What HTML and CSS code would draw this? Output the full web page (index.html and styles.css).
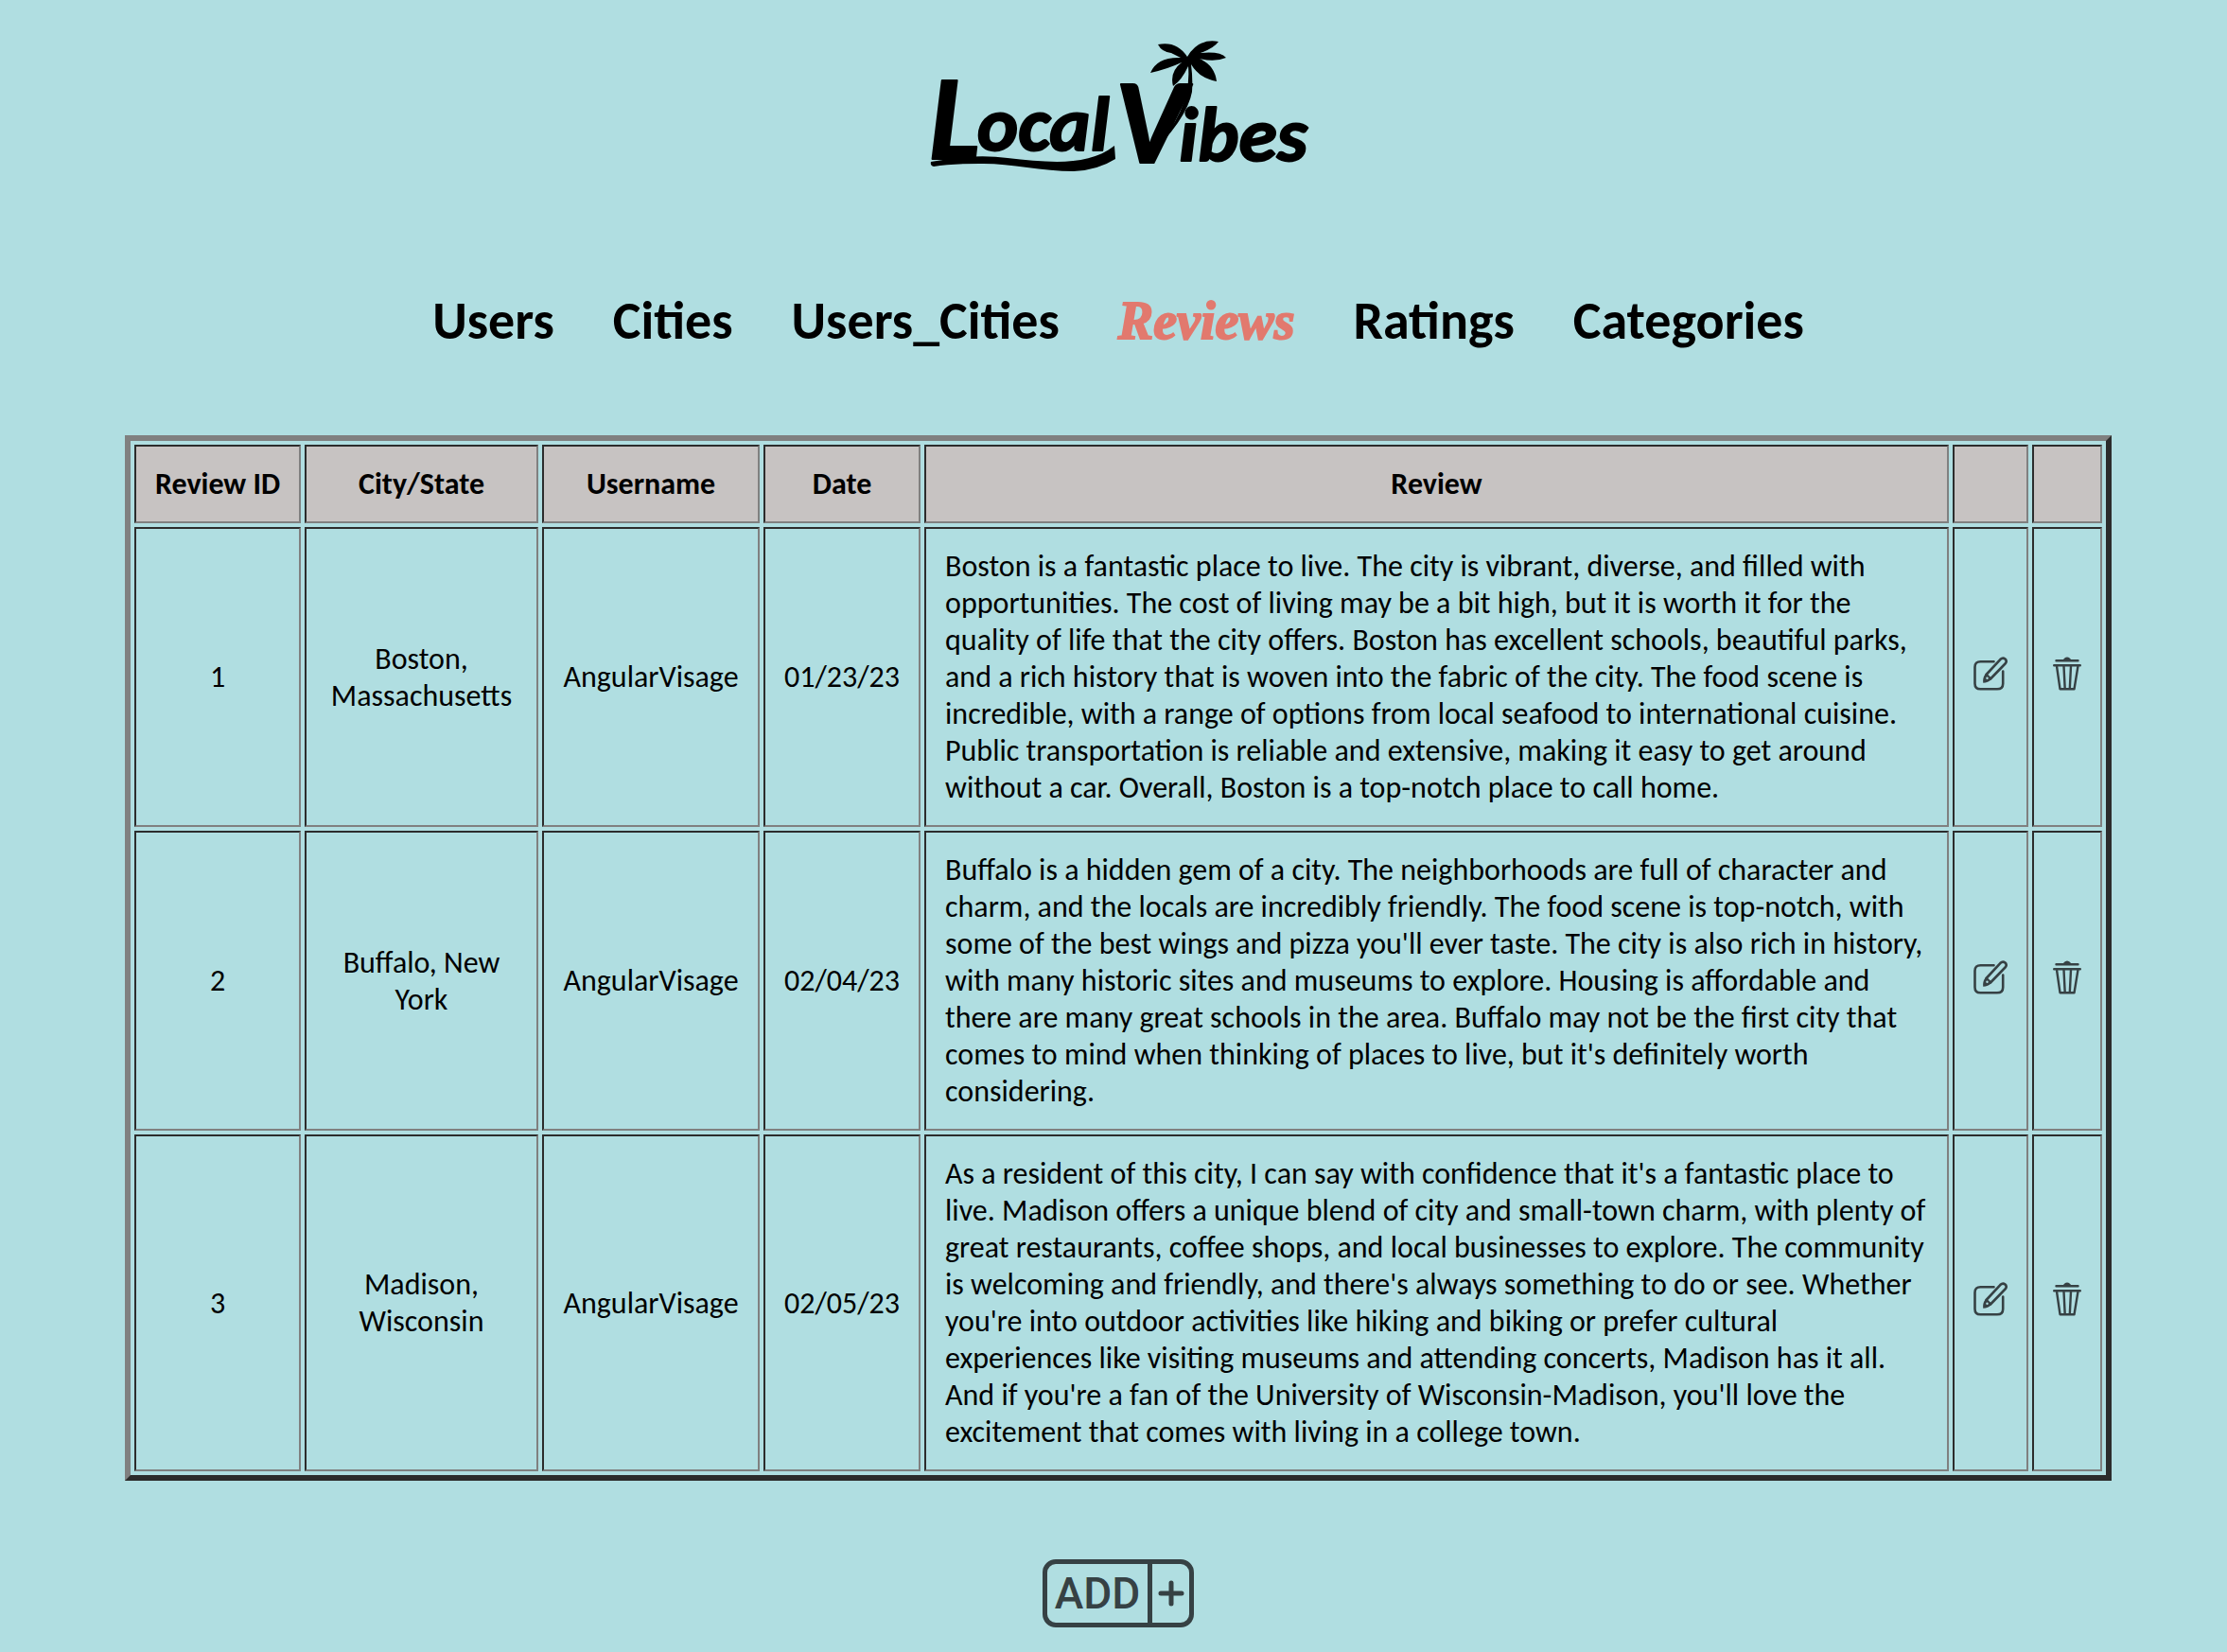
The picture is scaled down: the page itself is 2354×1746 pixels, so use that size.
FILE: index.html
```html
<!DOCTYPE html>
<html lang="en">
<head>
  <meta charset="utf-8">
  <meta name="viewport" content="width=device-width, initial-scale=1">
  <title>Local Vibes - Reviews</title>
  <link rel="stylesheet" href="styles.css">
</head>
<body>
  <svg class="sprite" aria-hidden="true">
    <symbol id="icon-edit" viewBox="0 0 36 36">
      <path d="M21.500 5.200H7.500Q1.500 5.200 1.500 11V28.500Q1.500 34.300 7.500 34.300H25Q31.200 34.300 31.200 28.500V15.500" fill="none" stroke="currentColor" stroke-width="2.600" stroke-linecap="round"/>
      <path d="M13.500 19 28.500 2.800Q31 .500 33.500 2.500Q36 5 33.500 7.500L18 23.500Z" fill="none" stroke="currentColor" stroke-width="2.600" stroke-linejoin="round"/>
      <path d="M12.500 18.500 18.800 24Q15.500 27.800 10.200 27.800Q9.500 22.500 12.500 18.500Z" fill="currentColor"/>
      <circle cx="14.500" cy="22.800" r="1.200" fill="#b0dee1"/>
    </symbol>
    <symbol id="icon-trash" viewBox="0 0 30 36">
      <path d="M3.500 4.200H26.500M1.200 9.200H28.800" fill="none" stroke="currentColor" stroke-width="2.400" stroke-linecap="round"/>
      <path d="M10.500 4Q12 .500 15 .500T19.500 4Z" fill="currentColor"/>
      <path d="M4 10 7.500 34.200H22.500L26.500 10M11.500 10 12.700 34M19 10 17.800 34" fill="none" stroke="currentColor" stroke-width="2.400" stroke-linejoin="round"/>
    </symbol>
  </svg>

  <header class="site-header">
    <svg class="logo" viewBox="2 0 440 180" role="img" aria-label="Local Vibes">
      <g class="logo-text">
        <text class="logo-cap" x="22" y="148">L</text>
        <text class="logo-small" x="73" y="139">ocal</text>
        <text class="logo-cap" x="218" y="152">V</text>
        <text class="logo-small" x="286" y="150">ibes</text>
      </g>
      <path d="M24 151Q70 142 105 147C150 152 190 156 218 134L219 148Q200 160 175 161C140 161 105 152 75 153Q45 153 27 156Q23 155 24 151Z"/>
      <path d="M295 40Q284 23 264 27Q268 35 278 36L288 41Q263 40 256 57Q274 53 289 46Q276 56 280 71Q289 65 296 50Q300 95 260 137L250 150Q295 106 300 77Q301 63 299 48Q308 63 326 66Q324 49 308 42Q324 46 336 41Q330 34 309 36Q323 31 328 24Q307 20 295 40Z"/>
    </svg>
  </header>

  <nav class="main-nav" aria-label="Main">
    <a href="#users">Users</a>
    <a href="#cities">Cities</a>
    <a href="#users-cities">Users_Cities</a>
    <a class="current" href="#reviews" aria-current="page">Reviews</a>
    <a href="#ratings">Ratings</a>
    <a href="#categories">Categories</a>
  </nav>

  <main>
    <table class="reviews">
      <colgroup>
        <col class="col-id"><col class="col-city"><col class="col-user"><col class="col-date"><col><col class="col-edit"><col class="col-delete">
      </colgroup>
      <thead>
        <tr><th>Review ID</th><th>City/State</th><th>Username</th><th>Date</th><th>Review</th><th></th><th></th></tr>
      </thead>
      <tbody>
        <tr>
          <td>1</td><td>Boston, Massachusetts</td><td>AngularVisage</td><td>01/23/23</td>
          <td class="review-text">Boston is a fantastic place to live. The city is vibrant, diverse, and filled with opportunities. The cost of living may be a bit high, but it is worth it for the quality of life that the city offers. Boston has excellent schools, beautiful parks, and a rich history that is woven into the fabric of the city. The food scene is incredible, with a range of options from local seafood to international cuisine. Public transportation is reliable and extensive, making it easy to get around without a car. Overall, Boston is a top-notch place to call home.</td>
          <td class="action"><button type="button" aria-label="Edit review 1"><svg class="edit"><use href="#icon-edit"/></svg></button></td>
          <td class="action"><button type="button" aria-label="Delete review 1"><svg class="trash"><use href="#icon-trash"/></svg></button></td>
        </tr>
        <tr>
          <td>2</td><td>Buffalo, New York</td><td>AngularVisage</td><td>02/04/23</td>
          <td class="review-text">Buffalo is a hidden gem of a city. The neighborhoods are full of character and charm, and the locals are incredibly friendly. The food scene is top-notch, with some of the best wings and pizza you'll ever taste. The city is also rich in history, with many historic sites and museums to explore. Housing is affordable and there are many great schools in the area. Buffalo may not be the first city that comes to mind when thinking of places to live, but it's definitely worth considering.</td>
          <td class="action"><button type="button" aria-label="Edit review 2"><svg class="edit"><use href="#icon-edit"/></svg></button></td>
          <td class="action"><button type="button" aria-label="Delete review 2"><svg class="trash"><use href="#icon-trash"/></svg></button></td>
        </tr>
        <tr>
          <td>3</td><td>Madison, Wisconsin</td><td>AngularVisage</td><td>02/05/23</td>
          <td class="review-text">As a resident of this city, I can say with confidence that it's a fantastic place to live. Madison offers a unique blend of city and small-town charm, with plenty of great restaurants, coffee shops, and local businesses to explore. The community is welcoming and friendly, and there's always something to do or see. Whether you're into outdoor activities like hiking and biking or prefer cultural experiences like visiting museums and attending concerts, Madison has it all. And if you're a fan of the University of Wisconsin-Madison, you'll love the excitement that comes with living in a college town.</td>
          <td class="action"><button type="button" aria-label="Edit review 3"><svg class="edit"><use href="#icon-edit"/></svg></button></td>
          <td class="action"><button type="button" aria-label="Delete review 3"><svg class="trash"><use href="#icon-trash"/></svg></button></td>
        </tr>
      </tbody>
    </table>

    <button class="add-button" type="button">
      <span class="add-label">ADD</span>
      <span class="add-plus"><svg viewBox="0 0 28 28" aria-hidden="true"><path d="M14 3V25M3 14H25" fill="none" stroke="currentColor" stroke-width="5" stroke-linecap="round"/></svg></span>
    </button>
  </main>
</body>
</html>
```
FILE: styles.css
```css
* {
  box-sizing: border-box;
}

body {
  margin: 0;
  padding: 20px 122px 20px 132px;
  background: #b0dee1;
  color: #000;
  font-family: Carlito, Lato, sans-serif;
  font-size: 32px;
  line-height: 39px;
}

.sprite {
  display: none;
}

.site-header {
  display: flex;
  justify-content: center;
}

.logo {
  width: 440px;
  height: 180px;
}

.logo-text {
  font-style: italic;
  font-weight: 700;
  stroke: #000;
  stroke-width: 2px;
  stroke-linejoin: round;
}

.logo-cap {
  font-size: 128px;
}

.logo-small {
  font-size: 82px;
}

.main-nav {
  display: flex;
  justify-content: center;
  align-items: baseline;
  height: 160px;
  margin: 100px 0 0;
  gap: 62px;
  line-height: 78px;
}

.main-nav a {
  color: inherit;
  font-size: 56px;
  font-weight: 700;
  text-decoration: none;
}

.main-nav .current {
  color: #e2796e;
  font-family: "Liberation Serif", serif;
  font-style: italic;
  -webkit-text-stroke: 2px #e2796e;
}

.reviews {
  width: 100%;
  table-layout: fixed;
  border: 6px solid;
  border-color: #808080 #2c2c2c #2c2c2c #808080;
  border-spacing: 4px;
  text-align: center;
}

.reviews th,
.reviews td {
  padding: 20px;
  border: 2px solid;
  border-color: #2c2c2c #808080 #808080 #2c2c2c;
}

.reviews th {
  padding: 20px 16px;
  background: #c7c3c2;
  white-space: nowrap;
}

.col-id {
  width: 176px;
}

.col-city {
  width: 247px;
}

.col-user {
  width: 230px;
}

.col-date {
  width: 166px;
}

.col-edit {
  width: 80px;
}

.col-delete {
  width: 74px;
}

.reviews .review-text {
  text-align: left;
}

.reviews .action {
  padding: 20px 0 28px;
}

.action button {
  display: flex;
  margin: 0 auto;
  padding: 0;
  border: 0;
  background: none;
  color: #364144;
  cursor: pointer;
}

.action svg {
  height: 36px;
}

.edit {
  width: 36px;
}

.trash {
  width: 30px;
}

.add-button {
  display: flex;
  width: 160px;
  height: 72px;
  margin: 83px auto 0;
  padding: 0;
  border: 5px solid #364144;
  border-radius: 14px;
  background: none;
  color: #364144;
  cursor: pointer;
}

.add-label {
  flex: 1;
  font-family: Roboto, sans-serif;
  font-size: 46px;
  font-weight: 500;
  line-height: 62px;
}

.add-plus {
  display: flex;
  align-items: center;
  justify-content: center;
  width: 44px;
  height: 62px;
  border-left: 5px solid;
}

.add-plus svg {
  width: 28px;
  height: 28px;
}
```
